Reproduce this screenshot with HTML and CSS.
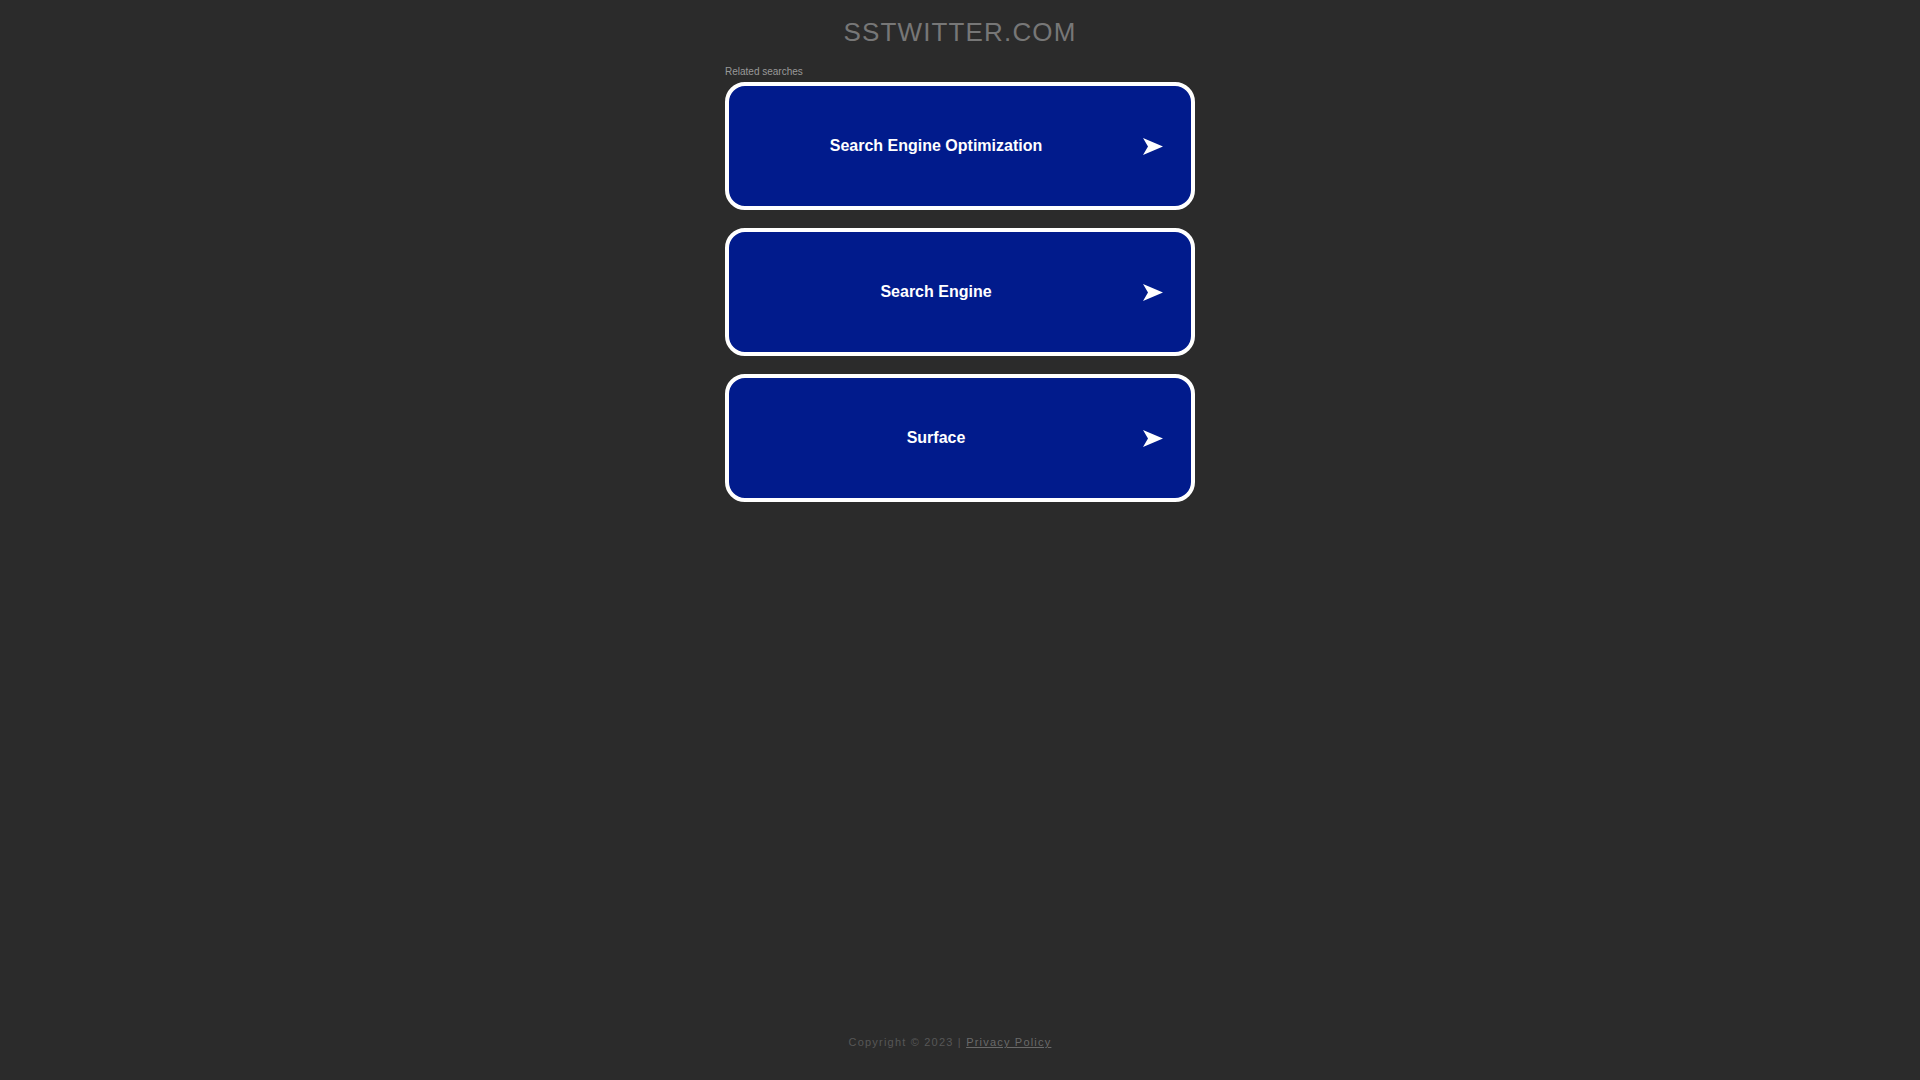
FILE: index.html
```html
<!DOCTYPE html>
<html lang="en">
<head>
<meta charset="utf-8">
<title>sstwitter.com</title>
<link rel="stylesheet" href="styles.css">
</head>
<body>
<div class="page">
  <h1 class="domain">SSTWITTER.COM</h1>
  <main class="searches">
    <div class="label">Related searches</div>
    <a class="card" href="#">
      <span class="card-text">Search Engine Optimization</span>
      <svg class="arrow" width="20" height="17" viewBox="0 0 20 17"><polygon points="0,0 20,8.5 0,17 5,8.5" fill="#fff"/></svg>
    </a>
    <a class="card" href="#">
      <span class="card-text">Search Engine</span>
      <svg class="arrow" width="20" height="17" viewBox="0 0 20 17"><polygon points="0,0 20,8.5 0,17 5,8.5" fill="#fff"/></svg>
    </a>
    <a class="card" href="#">
      <span class="card-text">Surface</span>
      <svg class="arrow" width="20" height="17" viewBox="0 0 20 17"><polygon points="0,0 20,8.5 0,17 5,8.5" fill="#fff"/></svg>
    </a>
  </main>
  <footer class="footer">Copyright © 2023 | <a class="privacy" href="#">Privacy Policy</a></footer>
</div>
</body>
</html>
```

FILE: styles.css
```css
html, body {
  margin: 0;
  padding: 0;
  background: #2b2b2b;
}
body {
  font-family: "Liberation Sans", Arial, sans-serif;
}
.page {
  min-height: 100vh;
  display: flex;
  flex-direction: column;
  align-items: center;
  box-sizing: border-box;
}
.domain {
  margin: 0;
  padding-top: 17px;
  font-size: 26px;
  line-height: 30px;
  font-weight: normal;
  letter-spacing: 1.15px;
  color: #777;
  text-align: center;
}
.searches {
  width: 470px;
  margin-top: 19px;
  display: flex;
  flex-direction: column;
}
.label {
  font-size: 10px;
  line-height: 12px;
  color: #999;
  margin-bottom: 4px;
}
.card {
  display: flex;
  align-items: center;
  height: 128px;
  box-sizing: border-box;
  border: 4px solid #fff;
  border-radius: 20px;
  background: #011b8c;
  padding: 0 28px 0 0;
  margin-bottom: 18px;
  text-decoration: none;
}
.card-text {
  flex: 1;
  text-align: center;
  color: #fff;
  font-weight: bold;
  font-size: 16px;
  line-height: 20px;
}
.arrow {
  display: block;
  flex: none;
}
.footer {
  margin-top: auto;
  padding: 0 20px 31px 0;
  font-size: 11px;
  line-height: 14px;
  letter-spacing: 1.2px;
  color: #575757;
}
.privacy {
  color: #6a6a6a;
  font-weight: normal;
  text-decoration: underline;
}
```
